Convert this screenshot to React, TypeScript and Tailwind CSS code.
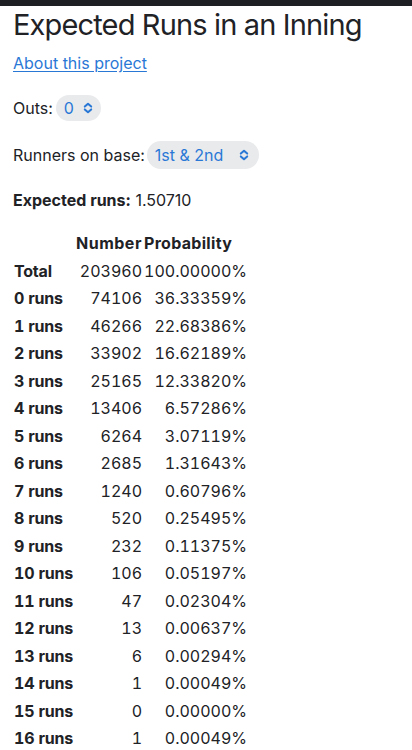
const rows: [string, number, string][] = [
  ["Total", 203960, "100.00000%"],
  ["0 runs", 74106, "36.33359%"],
  ["1 runs", 46266, "22.68386%"],
  ["2 runs", 33902, "16.62189%"],
  ["3 runs", 25165, "12.33820%"],
  ["4 runs", 13406, "6.57286%"],
  ["5 runs", 6264, "3.07119%"],
  ["6 runs", 2685, "1.31643%"],
  ["7 runs", 1240, "0.60796%"],
  ["8 runs", 520, "0.25495%"],
  ["9 runs", 232, "0.11375%"],
  ["10 runs", 106, "0.05197%"],
  ["11 runs", 47, "0.02304%"],
  ["12 runs", 13, "0.00637%"],
  ["13 runs", 6, "0.00294%"],
  ["14 runs", 1, "0.00049%"],
  ["15 runs", 0, "0.00000%"],
  ["16 runs", 1, "0.00049%"],
]

function Chevrons() {
  return (
    <svg width="12" height="12" viewBox="0 0 12 12" fill="none" stroke="currentColor" strokeWidth="2" strokeLinecap="round" strokeLinejoin="round">
      <path d="M2.8 4.6 6 1.7 9.2 4.6" />
      <path d="M2.8 7.4 6 10.3 9.2 7.4" />
    </svg>
  )
}

function Select({ value, className }: { value: string; className: string }) {
  return (
    <span className={"inline-flex items-center rounded-full bg-[#e9eaec] text-[#2a78d6] " + className}>
      <span>{value}</span>
      <Chevrons />
    </span>
  )
}

export default function App() {
  return (
    <div className="min-h-[750px] bg-white font-['Inter','Liberation_Sans',sans-serif] text-[16px] text-[#212226]">
      <div className="h-[6px] bg-[#1e1f23]" />
      <div className="px-[13px]">
        <h1 className="text-[29px] leading-[38px] tracking-[-0.85px]">Expected Runs in an Inning</h1>
        <a href="#" className="mt-[7px] block w-fit text-[16px] leading-[24px] text-[#2a78d6] underline underline-offset-2">
          About this project
        </a>
        <div className="mt-[20px] flex h-[26px] items-center gap-[3px]">
          <span>Outs:</span>
          <Select value="0" className="h-[26px] w-[45px] gap-[8px] pl-[8px]" />
        </div>
        <div className="mt-[20px] flex h-[28px] items-center gap-[2px]">
          <span>Runners on base:</span>
          <Select value="1st & 2nd" className="h-[28px] w-[112px] gap-[15px] pl-[8px]" />
        </div>
        <p className="mt-[19px] leading-[24px]">
          <span className="font-bold">Expected runs:</span> 1.50710
        </p>
        <table className="mt-[16px] -ml-[1px] border-separate border-spacing-[2px] whitespace-nowrap tabular-nums">
          <thead>
            <tr className="h-[26px]">
              <th className="w-[60px] p-0"></th>
              <th className="w-[66px] p-0 text-left font-bold tracking-[0.5px]">Number</th>
              <th className="w-[98px] p-0 text-left font-bold tracking-[0.3px]">Probability</th>
            </tr>
          </thead>
          <tbody>
            {rows.map(([label, n, p]) => (
              <tr key={label} className="h-[25.5px]">
                <th className="p-0 text-left font-bold tracking-[-0.2px]">{label}</th>
                <td className="p-0 text-right">{n}</td>
                <td className="p-0 text-right">{p}</td>
              </tr>
            ))}
          </tbody>
        </table>
      </div>
    </div>
  )
}
